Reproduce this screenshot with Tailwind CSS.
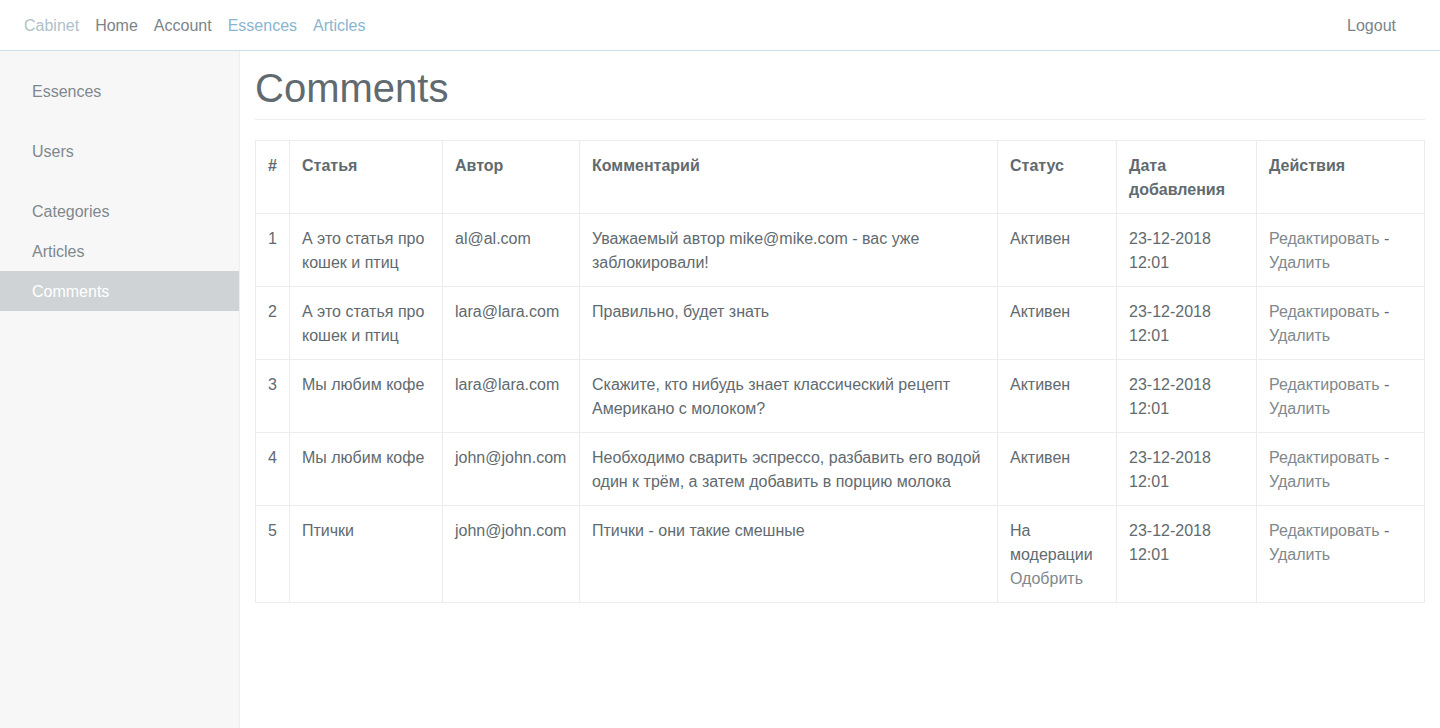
<!DOCTYPE html>
<html lang="ru">
<head>
<meta charset="utf-8">
<title>Comments</title>
<script src="https://cdn.jsdelivr.net/npm/@tailwindcss/browser@4"></script>
</head>
<body class="min-h-screen flex flex-col bg-white text-base text-[#616a6f] font-['Liberation_Sans',Arial,sans-serif]">
<header class="flex items-center justify-between border-b border-[#cfdfe9] pl-4 pr-9 pt-[6px] pb-1">
  <nav class="flex">
    <a href="#" class="p-2 text-[#b0c0ca]">Cabinet</a>
    <a href="#" class="p-2 text-[#7b8489]">Home</a>
    <a href="#" class="p-2 text-[#7b8489]">Account</a>
    <a href="#" class="p-2 text-[#89b5d1]">Essences</a>
    <a href="#" class="p-2 text-[#89b5d1]">Articles</a>
  </nav>
  <a href="#" class="p-2 text-[#7b8489]">Logout</a>
</header>
<div class="flex grow">
  <aside class="w-60 shrink-0 border-r border-[#eeeeee] bg-[#f7f7f7] pt-5 text-[#7f888d]">
    <nav class="flex flex-col gap-5">
      <a href="#" class="block px-8 pt-[9px] pb-[7px]">Essences</a>
      <a href="#" class="block px-8 pt-[9px] pb-[7px]">Users</a>
      <div>
        <a href="#" class="block px-8 pt-[9px] pb-[7px]">Categories</a>
        <a href="#" class="block px-8 pt-[9px] pb-[7px]">Articles</a>
        <a href="#" class="block px-8 pt-[9px] pb-[7px] bg-[#cfd3d6] text-white">Comments</a>
      </div>
    </nav>
  </aside>
  <main class="grow px-[15px] pt-[13px]">
    <h1 class="border-b border-[#eeeeee] pb-[7px] text-[40px] leading-[48px]">Comments</h1>
    <table class="mt-5 w-full table-fixed border-collapse text-left [&_td]:border [&_td]:border-[#ececec] [&_td]:px-3 [&_td]:pt-[13px] [&_td]:pb-[11px] [&_td]:align-top [&_th]:border [&_th]:border-[#ececec] [&_th]:px-3 [&_th]:pt-[13px] [&_th]:pb-[11px] [&_th]:align-top [&_a]:text-[#7f888d]">
      <colgroup>
        <col class="w-[34px]"><col class="w-[153px]"><col class="w-[137px]"><col><col class="w-[119px]"><col class="w-[140px]"><col class="w-[168px]">
      </colgroup>
      <thead>
        <tr><th>#</th><th>Статья</th><th>Автор</th><th>Комментарий</th><th>Статус</th><th>Дата добавления</th><th>Действия</th></tr>
      </thead>
      <tbody>
        <tr><td>1</td><td>А это статья про кошек и птиц</td><td>al@al.com</td><td>Уважаемый автор mike@mike.com - вас уже заблокировали!</td><td>Активен</td><td>23-12-2018 12:01</td><td><a href="#">Редактировать</a> - <a href="#">Удалить</a></td></tr>
        <tr><td>2</td><td>А это статья про кошек и птиц</td><td>lara@lara.com</td><td>Правильно, будет знать</td><td>Активен</td><td>23-12-2018 12:01</td><td><a href="#">Редактировать</a> - <a href="#">Удалить</a></td></tr>
        <tr><td>3</td><td>Мы любим кофе</td><td>lara@lara.com</td><td>Скажите, кто нибудь знает классический рецепт Американо с молоком?</td><td>Активен</td><td>23-12-2018 12:01</td><td><a href="#">Редактировать</a> - <a href="#">Удалить</a></td></tr>
        <tr><td>4</td><td>Мы любим кофе</td><td>john@john.com</td><td>Необходимо сварить эспрессо, разбавить его водой один к трём, а затем добавить в порцию молока</td><td>Активен</td><td>23-12-2018 12:01</td><td><a href="#">Редактировать</a> - <a href="#">Удалить</a></td></tr>
        <tr><td>5</td><td>Птички</td><td>john@john.com</td><td>Птички - они такие смешные</td><td>На модерации <a href="#">Одобрить</a></td><td>23-12-2018 12:01</td><td><a href="#">Редактировать</a> - <a href="#">Удалить</a></td></tr>
      </tbody>
    </table>
  </main>
</div>
</body>
</html>
